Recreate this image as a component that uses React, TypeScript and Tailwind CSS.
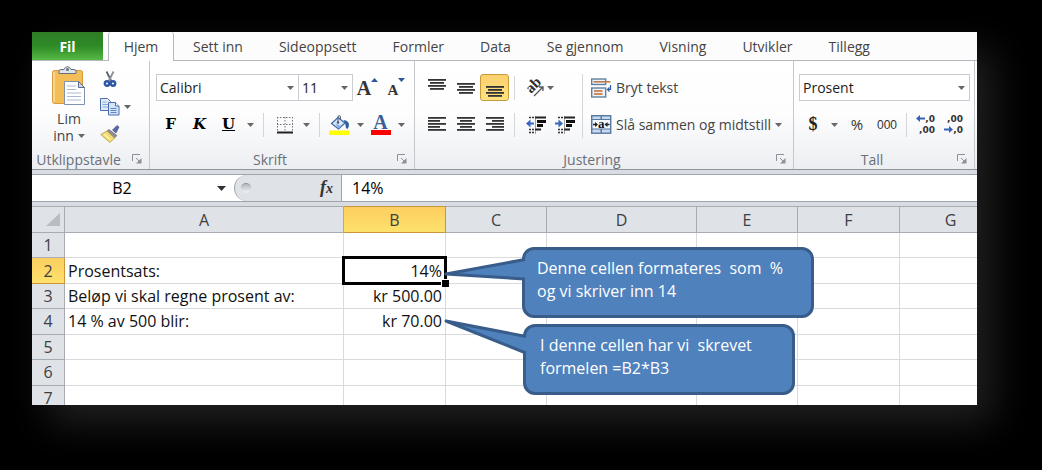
import React from 'react'

type Column = {
    name: string;
    width: string;
}

const tabs = ['Sett inn', 'Sideoppsett', 'Formler', 'Data', 'Se gjennom', 'Visning', 'Utvikler', 'Tillegg']

const columns: Column[] = [
    { name: 'A', width: 'w-[279px]' },
    { name: 'B', width: 'w-[102px]' },
    { name: 'C', width: 'w-[101px]' },
    { name: 'D', width: 'w-[150px]' },
    { name: 'E', width: 'w-[101px]' },
    { name: 'F', width: 'w-[102px]' },
    { name: 'G', width: 'w-[102px]' },
]

const cells: Record<string, string> = {
    A2: 'Prosentsats:',
    B2: '14%',
    A3: 'Beløp vi skal regne prosent av:',
    B3: 'kr 500.00',
    A4: '14 % av 500 blir:',
    B4: 'kr 70.00',
}

const Caret = () => (
    <svg width="7" height="4" viewBox="0 0 7 4" className="shrink-0">
      <path d="M0 0h7L3.500 4z" fill="#666" />
    </svg>
)

const DropButton = ({ label }: { label: string }) => (
    <button aria-label={label} className="flex h-[27px] w-[14px] items-center justify-center">
      <Caret />
    </button>
)

const IconButton = ({ label, width = 'w-[29px]', children }: { label: string; width?: string; children: React.ReactNode }) => (
    <button aria-label={label} className={`flex h-[27px] items-center justify-center ${width}`}>
      {children}
    </button>
)

const Separator = ({ className }: { className: string }) => (
    <div className={`w-px shrink-0 bg-[#d3d6da] ${className}`} />
)

const Combo = ({ label, value, width }: { label: string; value: string; width: string }) => (
    <div className={`relative h-[27px] ${width}`}>
      <select aria-label={label} className="h-full w-full appearance-none border border-[#c9ccd1] bg-white pl-[3px] text-[14px] text-[#1c1c1c]">
        <option>{value}</option>
      </select>
      <div className="pointer-events-none absolute inset-y-0 right-[5px] flex items-center">
        <Caret />
      </div>
    </div>
)

const Group = ({ title, width, padding = '', children }: { title: string; width: string; padding?: string; children: React.ReactNode }) => (
    <section className={`flex shrink-0 flex-col border-r border-[#c5c9ce] ${width}`}>
      <div className={`flex h-[88px] pt-[13px] ${padding}`}>{children}</div>
      <div className="flex h-5 items-center text-[14px] text-[#6a7078]">
        <span className="flex-1 text-center">{title}</span>
        <button aria-label={`${title} innstillinger`} className="flex w-6 justify-center">
          <svg width="10" height="10" viewBox="0 0 10 10" fill="none" stroke="#8c9198">
            <path d="M.5 7V.5H8M4 4l4 4" />
            <path d="M9.500 4v5.500H4z" fill="#8c9198" stroke="none" />
          </svg>
        </button>
      </div>
    </section>
)

const Rows = ({ children }: { children: React.ReactNode }) => (
    <div className="flex flex-col gap-[10px]">{children}</div>
)

// Stacked text lines: each entry is [x, width], drawn 3px apart
const Lines = ({ lines, y }: { lines: number[][]; y: number }) => (
    <svg width="20" height="20" viewBox="0 0 20 20" fill="#333">
      {lines.map(([x, w], i) => (
        <rect key={i} x={x} y={y + i * 3} width={w} height="1.800" />
      ))}
    </svg>
)

const PasteIcon = () => (
    <svg width="36" height="40" viewBox="0 0 36 40">
      <rect x="1.500" y="4.500" width="30" height="33" rx="2" fill="#f3bd58" stroke="#d99a3c" />
      <path d="M3 6v30" stroke="#f9d78e" strokeWidth="2" />
      <path d="M8 7.500V5q0-1.500 2-1.500h3Q14 .7 16.500.7T20 3.500h3q2 0 2 1.500v2.500z" fill="#dde3ea" stroke="#66717f" />
      <circle cx="16.500" cy="3.500" r="1.500" fill="#66717f" />
      <path d="M13.500 15.500h14l6 6v17h-20z" fill="#fff" stroke="#7f92b0" />
      <path d="M27.500 15.500v6h6z" fill="#ccd6e6" stroke="#5c6e8f" />
      <path d="M16 20h9M16 23.500h9M16 27h14M16 30.500h14M16 34h14" stroke="#a9b9d2" />
    </svg>
)

const CutIcon = () => (
    <svg width="14" height="20" viewBox="0 0 14 20" fill="none">
      <path d="M3.500 1.500l5 10" stroke="#5b6470" strokeWidth="1.800" />
      <path d="M10.500 1.500l-5 10" stroke="#8a929c" strokeWidth="1.800" />
      <ellipse cx="4" cy="13.500" rx="2.200" ry="2.300" stroke="#2f55a8" strokeWidth="2.400" />
      <ellipse cx="10" cy="13.500" rx="2.200" ry="2.300" stroke="#2f55a8" strokeWidth="2.400" />
    </svg>
)

const CopyIcon = () => (
    <svg width="20" height="18" viewBox="0 0 20 18" stroke="#4a6fae">
      <path d="M.5.5h7l3 3v9H.5z" fill="#e3edfa" />
      <path d="M2.500 4h4M2.500 6.500h6M2.500 9h6" stroke="#88a6d4" />
      <path d="M8.500 4.500h7l3.500 3.500v9H8.500z" fill="#d5e4f8" />
      <path d="M15.500 4.500V8H19" fill="#fff" />
      <path d="M10.500 10.500h6M10.500 12.500h6M10.500 14.500h6" stroke="#5f86c2" />
    </svg>
)

const BrushIcon = () => (
    <svg width="20" height="18" viewBox="0 0 20 18">
      <path d="M12.500 5l4.500-4.500 2 1.500-3 6z" fill="#5568a0" stroke="#3f4f80" strokeWidth=".6" />
      <path d="M9 4.500l8 6-2.500 2.500L7 6z" fill="#8e8e94" stroke="#5d5d66" strokeWidth=".6" />
      <path d="M7 6l7.500 7-4.500 4.500L.8 9.500z" fill="#f3dc71" stroke="#b5953a" strokeWidth=".8" />
      <path d="M4 9l6 5.500" stroke="#fff3b5" strokeWidth="1.500" />
    </svg>
)

const FontSizeIcon = ({ size, up }: { size: string; up: boolean }) => (
    <span className="flex h-5 items-end">
      <span className={`font-['Liberation_Serif'] leading-none font-bold text-[#333] ${size}`}>A</span>
      <svg width="7" height="18" viewBox="0 0 7 18" className="self-start">
        <path d={up ? 'M0 4h7L3.500 0z' : 'M0 0h7L3.500 4z'} fill="#2c569c" />
      </svg>
    </span>
)

const BordersIcon = () => (
    <svg width="18" height="18" viewBox="0 0 18 18" fill="none" stroke="#777">
      <path d="M1.500 1v14M9 1v14M16.500 1v14M1 1.500h16M1 8.500h16" strokeDasharray="1.500 1.500" />
      <path d="M1 16.500h16" stroke="#222" strokeWidth="2" />
    </svg>
)

const FillIcon = () => (
    <svg width="21" height="20" viewBox="0 0 21 20">
      <path d="M9 2.500l7 5.500-6.500 6-7-5.500z" fill="#dbe8f8" stroke="#3f67a8" strokeWidth="1.200" />
      <path d="M6 8.500l6.500 2.500-3 2.500z" fill="#86aee0" />
      <path d="M9 8V1.800Q9 .6 10.200.6t1.200 1.200V5" fill="none" stroke="#44556f" />
      <circle cx="9" cy="7.500" r="1.200" fill="#44556f" />
      <path d="M14.500 5q5 .5 5.500 4.500 0 3-1.500 4.500-2-.5-2-4.500z" fill="#335f9f" />
      <rect y="15.500" width="20" height="4.500" fill="#ff0" />
    </svg>
)

const FontColorIcon = () => (
    <span className="flex h-5 w-5 flex-col items-center">
      <span className="font-['Liberation_Serif'] text-[20px] leading-[15px] font-bold text-[#3a5f97]">A</span>
      <span className="mt-auto h-[5px] w-full bg-[#f00]" />
    </span>
)

const OrientationIcon = () => (
    <svg width="20" height="22" viewBox="0 0 20 22" className="overflow-visible">
      <text transform="translate(6 17) rotate(-45)" fontFamily="Liberation Serif, serif" fontSize="15" fontWeight="700" fill="#2d2d2d">ab</text>
      <path d="M9 19l9-9M18 14v-4h-4" fill="none" stroke="#555" strokeWidth="1.300" />
    </svg>
)

const IndentIcon = ({ decrease }: { decrease: boolean }) => (
    <svg width="20" height="18" viewBox="0 0 20 18">
      <path d="M3 1.500h6M3 13.500h6M3 16.500h6" stroke="#333" strokeWidth="1.500" strokeDasharray="2 1" />
      <path d="M9 1.500h11M9 13.500h6" stroke="#222" strokeWidth="1.800" />
      <path d="M11 5.500h9M11 9.500h6" stroke="#111" strokeWidth="3" />
      <path d={decrease ? 'M0 7.500L4.500 3.500v3H8v2H4.500v3z' : 'M8 7.500L3.500 3.500v3H0v2h3.500v3z'} fill="#3767be" />
      <path d="M9.500 .5V18" stroke="#444" strokeDasharray="1 1" />
    </svg>
)

const WrapIcon = () => (
    <svg width="21" height="20" viewBox="0 0 21 20">
      <rect x=".7" y="1" width="14" height="5.500" fill="#edf3fa" stroke="#61809f" strokeWidth="1.400" />
      <path d="M2.500 3.800h17" stroke="#bf7b48" strokeWidth="1.600" />
      <rect x=".7" y="10" width="14" height="9" fill="#edf3fa" stroke="#61809f" strokeWidth="1.400" />
      <path d="M3 13h8.500M3 16h8.500" stroke="#d08c5c" strokeWidth="1.800" />
      <path d="M19.500 7v4.500h-2.500M18.500 9.500l-2 2 2 2" fill="none" stroke="#2f5ca8" strokeWidth="1.200" />
    </svg>
)

const MergeIcon = () => (
    <svg width="21" height="19" viewBox="0 0 21 19">
      <rect x=".7" y=".7" width="19" height="17.500" fill="#c7d9ef" stroke="#56779f" strokeWidth="1.400" />
      <path d="M10.200 1v4M10.200 14v4" stroke="#56779f" strokeWidth="1.400" />
      <rect x="1" y="4.500" width="18.500" height="9.500" fill="#f4f8fd" stroke="#56779f" />
      <text x="7" y="13" fontFamily="Liberation Serif, serif" fontSize="13" fontWeight="700" fill="#111">a</text>
      <path d="M2 9.500h4M14.500 9.500h4" stroke="#222" strokeWidth="1.400" />
      <path d="M4 7l3 2.500-3 2.500zM16.500 7l-3 2.500 3 2.500z" fill="#222" />
    </svg>
)

const DecimalIcon = ({ more }: { more: boolean }) => (
    <svg width="20" height="23" viewBox="0 0 20 23" fontFamily="DejaVu Sans, sans-serif" fontSize="9" fontWeight="700" fill="#333">
      <text x="19" y="9" textAnchor="end">{more ? ',0' : ',00'}</text>
      <text x="19" y="20" textAnchor="end">{more ? ',00' : ',0'}</text>
      <path d={more ? 'M0 5.500L4 2v2.500h5v2H4V9z' : 'M9 16.500L5 13v2.500H0v2h5V20z'} fill="#3562b5" />
    </svg>
)

const Tabs = () => (
    <nav className="flex h-[29px] shrink-0 border-b border-[#b4b9c0] bg-[#fcfcfd] text-[14px] text-[#444]">
      <button className="h-[28px] w-[71px] shrink-0 bg-linear-to-b from-[#2f7d25] via-[#2d8a26] to-[#57b944] text-[14px] font-bold text-white">Fil</button>
      <button className="mr-px ml-[5px] h-[29px] w-[66px] shrink-0 rounded-t-[3px] border-x border-[#b4b9c0] bg-white">Hjem</button>
      {tabs.map((tab) => (
        <button key={tab} className="shrink-0 px-[18px]">{tab}</button>
      ))}
    </nav>
)

const Ribbon = () => (
    <div className="flex h-[109px] border-b border-[#8f959c] bg-linear-to-b from-white via-[#fdfdfe] to-[#eceef1] text-[14px] text-[#444]">
      <Group title="Utklippstavle" width="w-[118px]">
        <button className="-mt-2 ml-[18px] flex w-[38px] flex-col items-center leading-[17px]">
          <PasteIcon />
          <span className="mt-1">Lim</span>
          <span className="flex items-center gap-1">inn <Caret /></span>
        </button>
        <div className="-mt-2 ml-3 flex flex-col">
          <IconButton label="Klipp ut" width="w-5"><CutIcon /></IconButton>
          <div className="flex">
            <IconButton label="Kopier" width="w-5"><CopyIcon /></IconButton>
            <DropButton label="Kopier, flere valg" />
          </div>
          <IconButton label="Kopier format" width="w-5"><BrushIcon /></IconButton>
        </div>
      </Group>

      <Group title="Skrift" width="w-[265px]" padding="pl-[6px]">
        <Rows>
          <div className="flex">
            <Combo label="Skrift" value="Calibri" width="w-[143px]" />
            <Combo label="Skriftstørrelse" value="11" width="-ml-px w-[55px]" />
            <IconButton label="Forstørr skrift"><FontSizeIcon size="text-[20px]" up /></IconButton>
            <IconButton label="Forminsk skrift"><FontSizeIcon size="text-[15px]" up={false} /></IconButton>
          </div>
          <div className="flex items-center font-['DejaVu_Serif'] text-[15px] text-black">
            <IconButton label="Fet"><b>F</b></IconButton>
            <IconButton label="Kursiv"><b className="italic">K</b></IconButton>
            <IconButton label="Understreking"><b className="underline">U</b></IconButton>
            <DropButton label="Understrekingstype" />
            <Separator className="mx-[6px] h-6" />
            <IconButton label="Kantlinjer"><BordersIcon /></IconButton>
            <DropButton label="Flere kantlinjer" />
            <Separator className="mx-[6px] h-6" />
            <IconButton label="Fyllfarge" width="w-[27px]"><FillIcon /></IconButton>
            <DropButton label="Flere fyllfarger" />
            <IconButton label="Skriftfarge" width="w-[27px]"><FontColorIcon /></IconButton>
            <DropButton label="Flere skriftfarger" />
          </div>
        </Rows>
      </Group>

      <Group title="Justering" width="w-[379px]" padding="pl-[7px]">
        <Rows>
          <div className="flex items-center">
            <IconButton label="Toppjuster"><Lines y={1} lines={[[1, 18], [3, 14], [1, 18], [3, 14]]} /></IconButton>
            <IconButton label="Midtjuster"><Lines y={5} lines={[[1, 18], [3, 14], [1, 18], [3, 14]]} /></IconButton>
            <button aria-label="Bunnjuster" className="flex h-[27px] w-[29px] items-center justify-center rounded-[3px] border border-[#c79a3a] bg-linear-to-b from-[#fbd06c] to-[#fde383]">
              <Lines y={8} lines={[[1, 18], [3, 14], [1, 18], [3, 14]]} />
            </button>
            <Separator className="ml-[5px] h-6" />
          </div>
          <div className="flex items-center">
            <IconButton label="Venstrejuster"><Lines y={2} lines={[[1, 18], [1, 12], [1, 18], [1, 12], [1, 18]]} /></IconButton>
            <IconButton label="Midtstill"><Lines y={2} lines={[[1, 18], [4, 12], [1, 18], [4, 12], [1, 18]]} /></IconButton>
            <IconButton label="Høyrejuster"><Lines y={2} lines={[[1, 18], [7, 12], [1, 18], [7, 12], [1, 18]]} /></IconButton>
            <Separator className="ml-[5px] h-6" />
          </div>
        </Rows>
        <div className="ml-[6px]">
          <Rows>
            <button aria-label="Retning" className="flex h-[27px] items-center gap-[2px] px-1">
              <OrientationIcon />
              <Caret />
            </button>
            <div className="flex">
              <IconButton label="Reduser innrykk"><IndentIcon decrease /></IconButton>
              <IconButton label="Øk innrykk"><IndentIcon decrease={false} /></IconButton>
            </div>
          </Rows>
        </div>
        <Separator className="mr-2 ml-[3px] h-16" />
        <Rows>
          <button className="flex h-[27px] items-center gap-1">
            <WrapIcon />
            Bryt tekst
          </button>
          <button className="flex h-[27px] items-center gap-1 whitespace-nowrap">
            <MergeIcon />
            Slå sammen og midtstill
            <Caret />
          </button>
        </Rows>
      </Group>

      <Group title="Tall" width="w-[181px]" padding="pl-[5px]">
        <Rows>
          <Combo label="Tallformat" value="Prosent" width="w-[171px]" />
          <div className="flex items-center text-[#333]">
            <IconButton label="Valuta" width="w-7"><b className="font-['Liberation_Serif'] text-[18px] text-[#222]">$</b></IconButton>
            <DropButton label="Flere valutaer" />
            <IconButton label="Prosent" width="w-8"><span className="text-[15px]">%</span></IconButton>
            <IconButton label="Tusenskille" width="w-7"><span className="font-['Liberation_Sans'] text-[12px]">000</span></IconButton>
            <Separator className="mx-[5px] h-6" />
            <IconButton label="Flere desimaler" width="w-7"><DecimalIcon more /></IconButton>
            <IconButton label="Færre desimaler" width="w-7"><DecimalIcon more={false} /></IconButton>
          </div>
        </Rows>
      </Group>
    </div>
)

const FormulaBar = () => (
    <div className="flex h-[36px] flex-col bg-[#d9dde3] pt-1 pb-1">
      <div className="flex flex-1 border-y border-[#a0a5ac] bg-white text-[16px] text-black">
        <input aria-label="Navneboks" defaultValue="B2" className="w-[180px] min-w-0 shrink-0 text-center" />
        <button aria-label="Velg navn" className="flex w-[18px] shrink-0 items-center justify-center">
          <svg width="9" height="5" viewBox="0 0 9 5"><path d="M0 0h9L4.500 5z" fill="#333" /></svg>
        </button>
        <div className="ml-1 flex w-[108px] shrink-0 items-center justify-between rounded-l-full border-r border-l border-[#a0a5ac] bg-[#dfe3e8] pr-2 pl-[6px]">
          <span className="h-[10px] w-[10px] rounded-full border-t border-[#8e949b] bg-linear-to-b from-[#b4b9bf] to-[#f2f4f6]" />
          <button aria-label="Sett inn funksjon" className="font-['Liberation_Serif'] text-[18px] leading-5 font-bold text-[#333] italic">
            f<span className="text-[14px]">x</span>
          </button>
        </div>
        <input aria-label="Formellinje" defaultValue="14%" className="min-w-0 flex-1 pl-[10px]" />
      </div>
    </div>
)

const headerStyle = 'border-[#a7acb3] bg-[#dfe2e7] font-normal text-[#3c3f44]'
const activeStyle = 'border-[#c9963a] bg-linear-to-b from-[#fdce60] to-[#fde16c] font-normal text-[#3c3f44]'

const Sheet = () => (
    <table className="h-[205px] w-max min-w-full border-separate border-spacing-0 bg-white text-[16px] leading-5 text-[#111]">
      <colgroup>
        <col className="w-[33px]" />
        {columns.map((column) => <col key={column.name} className={column.width} />)}
      </colgroup>
      <thead>
        <tr className="h-[27px]">
          <th aria-label="Merk alt" className={`border-t border-r border-b p-0 ${headerStyle}`}>
            <svg width="14" height="13" viewBox="0 0 14 13" className="mr-1 ml-auto"><path d="M14 0v13H0z" fill="#b9bdc3" /></svg>
          </th>
          {columns.map(({ name }) => (
            <th key={name} className={`border-t border-r border-b p-0 ${name === 'B' ? activeStyle : headerStyle}`}>{name}</th>
          ))}
        </tr>
      </thead>
      <tbody>
        {[1, 2, 3, 4, 5, 6, 7].map((row) => (
          <tr key={row}>
            <th className={`border-r border-b p-0 ${row === 2 ? activeStyle : headerStyle}`}>{row}</th>
            {columns.map(({ name }) => (
              <td key={name} className={`relative border-r border-b border-[#d8dade] px-[3px] py-0 whitespace-nowrap ${name === 'B' ? 'text-right' : ''}`}>
                {cells[name + row]}
                {name + row === 'B2' && (
                  <div className="absolute -inset-[2px] z-10 border-[3px] border-black">
                    <div className="absolute -right-[5px] -bottom-[5px] h-[8px] w-[8px] border-t border-l border-white bg-black" />
                  </div>
                )}
              </td>
            ))}
          </tr>
        ))}
      </tbody>
    </table>
)

const Callout = ({ place, tail, children }: { place: string; tail: React.ReactNode; children: React.ReactNode }) => (
    <div className={`absolute z-20 rounded-xl border-[3px] border-[#385d8a] bg-[#4f81bd] pt-[7px] text-[16px] leading-[23px] whitespace-pre text-white ${place}`}>
      {tail}
      {children}
    </div>
)

export default function App() {
    return (
      <main className="min-h-screen bg-black pt-8 pr-[65px] pb-[65px] pl-8 font-['Open_Sans',sans-serif]">
        <div className="overflow-hidden bg-white shadow-[16px_18px_36px_#202020]">
          <Tabs />
          <Ribbon />
          <FormulaBar />
          <div className="relative h-[199px] overflow-hidden">
            <Sheet />
            <Callout
              place="top-[41px] left-[490px] h-[71px] w-[292px] pl-3"
              tail={
                <svg width="85" height="26" viewBox="0 0 85 26" className="absolute top-[6px] -left-[82px]">
                  <path d="M85 3L3 18l82 5.500z" fill="#4f81bd" />
                  <path d="M82 3.500L3 18l79 5" fill="none" stroke="#385d8a" strokeWidth="3" strokeLinejoin="round" />
                </svg>
              }
            >
              {'Denne cellen formateres  som  %\nog vi skriver inn 14'}
            </Callout>
            <Callout
              place="top-[118px] left-[491px] h-[71px] w-[272px] pl-[14px]"
              tail={
                <svg width="86" height="36" viewBox="0 0 86 36" className="absolute -top-[8px] -left-[83px]">
                  <path d="M86 18L3 2l83 33z" fill="#4f81bd" />
                  <path d="M83 17.500L3 2l80 32" fill="none" stroke="#385d8a" strokeWidth="3" strokeLinejoin="round" />
                </svg>
              }
            >
              {'I denne cellen har vi  skrevet\nformelen =B2*B3'}
            </Callout>
          </div>
        </div>
      </main>
    )
}
